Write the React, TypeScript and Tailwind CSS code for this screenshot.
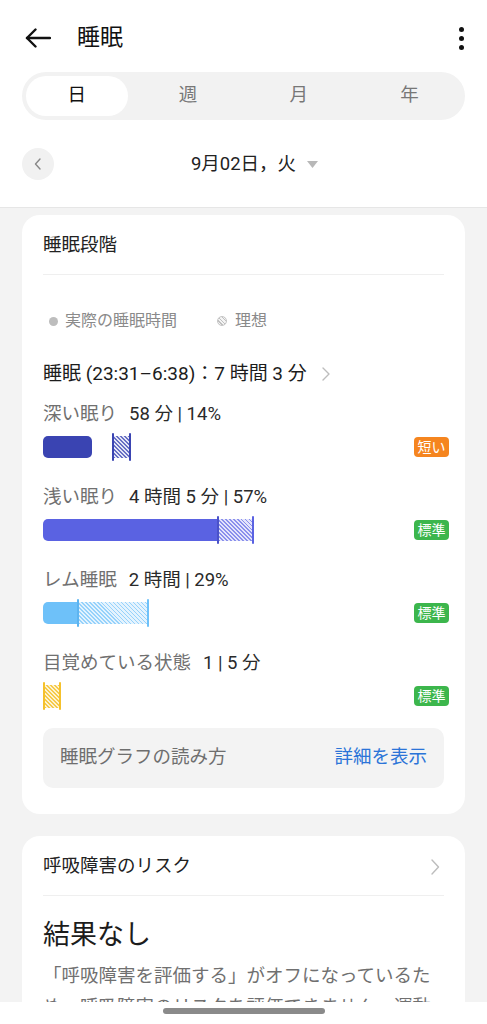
import React from 'react';

type Stage = {
  label: string;
  value: string;
  badge: string;
  badgeColor: string;
};

function Badge({ text, color }: { text: string; color: string }) {
  return (
    <div className={`${color} h-[20px] w-[35px] rounded-[4px] text-white text-[14px] leading-[20px] text-center`}>
      {text}
    </div>
  );
}

function Marker({ color, tall = 'h-[28px]' }: { color: string; tall?: string }) {
  return <div className={`w-[2px] ${tall} ${color} rounded-[1px]`} />;
}

function StageRow({ stage, children }: { stage: Stage; children: React.ReactNode }) {
  return (
    <div>
      <div className="h-[26px] flex items-center text-[18.5px]">
        <span className="text-[#707070]">{stage.label}</span>
        <span className="ml-3 text-[#2a2a2a]">{stage.value}</span>
      </div>
      <div className="mt-[5px] h-[28px] flex items-center justify-between -mr-[5px]">
        <div className="flex items-center">{children}</div>
        <Badge text={stage.badge} color={stage.badgeColor} />
      </div>
    </div>
  );
}

export default function App() {
  return (
    <div className="h-[1024px] w-full flex flex-col bg-[#f3f3f3] font-['Roboto','Noto_Sans_CJK_JP',sans-serif] overflow-hidden">
      <div className="flex-1 overflow-hidden">
        {/* Header */}
        <div className="bg-white border-b border-[#e6e6e6]">
          <div className="h-[72px] pt-[4px] flex items-center px-[25px]">
            <svg width="26" height="20" viewBox="0 0 26 20" fill="none" stroke="#111" strokeWidth="2.4" strokeLinecap="round" strokeLinejoin="round">
              <path d="M2 10H25" />
              <path d="M10.5 1.5L2 10l8.5 8.5" />
            </svg>
            <div className="ml-[26px] text-[23px] text-[#111]">睡眠</div>
            <div className="ml-auto mr-[-2px] flex flex-col gap-[4px] items-center">
              <span className="w-[5px] h-[5px] rounded-full bg-[#111]" />
              <span className="w-[5px] h-[5px] rounded-full bg-[#111]" />
              <span className="w-[5px] h-[5px] rounded-full bg-[#111]" />
            </div>
          </div>

          {/* Tabs */}
          <div className="mx-[22px] h-[48px] rounded-full bg-[#f2f2f2] grid grid-cols-4 text-[18.5px]">
            <div className="p-[4px] pr-[5px]">
              <div className="h-full rounded-full bg-white flex items-center justify-center text-[#111]">
                日
              </div>
            </div>
            <div className="flex items-center justify-center text-[#777]">週</div>
            <div className="flex items-center justify-center text-[#777]">月</div>
            <div className="flex items-center justify-center text-[#777]">年</div>
          </div>

          {/* Date row */}
          <div className="mt-[28px] pb-[27px] px-[22px] grid grid-cols-[1fr_auto_1fr] items-center">
            <div>
              <div className="w-[32px] h-[32px] rounded-full bg-[#f1f1f1] flex items-center justify-center">
                <svg width="10" height="14" viewBox="0 0 10 14" fill="none" stroke="#888" strokeWidth="1.4" strokeLinecap="round" strokeLinejoin="round">
                  <path d="M7 2L2.5 7 7 12" />
                </svg>
              </div>
            </div>
            <div className="text-[18.5px] text-[#222] leading-[32px]">9月02日，火</div>
            <div className="pl-[11px] flex items-center">
              <svg width="11" height="7" viewBox="0 0 11 7">
                <path d="M0 0H11L5.5 7Z" fill="#b8b8b8" />
              </svg>
            </div>
          </div>
        </div>

        {/* Sleep stages card */}
        <div className="mx-[22px] mt-[7px] bg-white rounded-[18px] px-[21px] pt-[18px] pb-[26px]">
          <div className="h-[26px] flex items-center text-[18.5px] text-[#222]">睡眠段階</div>
          <div className="mt-[15px] h-px bg-[#efefef]" />

          <div className="mt-[34px] h-[24px] flex items-center text-[16px] text-[#8a8a8a]">
            <span className="ml-[6px] w-[9px] h-[9px] rounded-full bg-[#bdbdbd]" />
            <span className="ml-[7px]">実際の睡眠時間</span>
            <span className="ml-[40px] w-[10px] h-[10px] rounded-full border border-[#c4c4c4] bg-[repeating-linear-gradient(45deg,#c0c0c0_0_1px,#f4f4f4_1px_2.6px)]" />
            <span className="ml-[8px]">理想</span>
          </div>

          <div className="mt-[27px] h-[28px] flex items-center text-[19px] text-[#1c1c1c]">
            <span>睡眠 (23:31–6:38)：7 時間 3 分</span>
            <svg className="ml-[14px]" width="10" height="16" viewBox="0 0 10 16" fill="none" stroke="#bdbdbd" strokeWidth="1.4" strokeLinecap="round" strokeLinejoin="round">
              <path d="M2 2l6 6-6 6" />
            </svg>
          </div>

          <div className="mt-[14px] flex flex-col gap-[24px]">
            <StageRow stage={{ label: '深い眠り', value: '58 分 | 14%', badge: '短い', badgeColor: 'bg-[#f5851f]' }}>
              <div className="w-[49px] h-[22px] rounded-[5px] bg-[#3a44b2]" />
              <div className="ml-[20px]" />
              <Marker color="bg-[#3a44b2]" />
              <div className="w-[15px] h-[22px] bg-[repeating-linear-gradient(45deg,#6870c4_0_1px,#e4e6f6_1px_2.8px)]" />
              <Marker color="bg-[#3a44b2]" />
            </StageRow>

            <StageRow stage={{ label: '浅い眠り', value: '4 時間 5 分 | 57%', badge: '標準', badgeColor: 'bg-[#3cb64c]' }}>
              <div className="w-[174px] h-[22px] rounded-l-[5px] bg-[#5a62e2]" />
              <Marker color="bg-[#4a52c8]" />
              <div className="w-[33px] h-[22px] bg-[repeating-linear-gradient(45deg,#8a90ec_0_1px,#e4e5fb_1px_2.8px)]" />
              <Marker color="bg-[#5a62e2]" />
            </StageRow>

            <StageRow stage={{ label: 'レム睡眠', value: '2 時間 | 29%', badge: '標準', badgeColor: 'bg-[#3cb64c]' }}>
              <div className="w-[34px] h-[22px] rounded-l-[5px] bg-[#6ec1f9]" />
              <Marker color="bg-[#5db4f0]" />
              <div className="w-[68px] h-[22px] bg-[repeating-linear-gradient(45deg,#96d2fb_0_1px,#e4f3fe_1px_2.8px)]" />
              <Marker color="bg-[#6ec1f9]" />
            </StageRow>

            <StageRow stage={{ label: '目覚めている状態', value: '1 | 5 分', badge: '標準', badgeColor: 'bg-[#3cb64c]' }}>
              <Marker color="bg-[#f5c12c]" />
              <div className="w-[14px] h-[23px] bg-[repeating-linear-gradient(45deg,#f6ca4a_0_1px,#fdf3d2_1px_2.8px)]" />
              <Marker color="bg-[#f5c12c]" />
            </StageRow>
          </div>

          <div className="mt-[18px] h-[60px] rounded-[10px] bg-[#f3f3f3] px-[17px] flex items-center justify-between text-[18.5px]">
            <span className="text-[#6e6e6e]">睡眠グラフの読み方</span>
            <span className="text-[#2b74d8]">詳細を表示</span>
          </div>
        </div>

        {/* Breathing risk card */}
        <div className="mx-[22px] mt-[22px] bg-white rounded-[18px] px-[21px] pt-[18px] pb-[20px]">
          <div className="h-[26px] flex items-center justify-between text-[18.5px] text-[#222]">
            <span>呼吸障害のリスク</span>
            <svg className="mr-[4px]" width="10" height="18" viewBox="0 0 10 18" fill="none" stroke="#bdbdbd" strokeWidth="1.4" strokeLinecap="round" strokeLinejoin="round">
              <path d="M2 2l6.5 7L2 16" />
            </svg>
          </div>
          <div className="mt-[15px] h-px bg-[#efefef]" />
          <div className="mt-[21px] h-[36px] flex items-center text-[27px] text-[#1c1c1c]">結果なし</div>
          <p className="mt-[8px] text-[18.5px] leading-[31px] text-[#707070]">
            「呼吸障害を評価する」がオフになっているため、呼吸障害のリスクを評価できません。運動中の呼吸障害を確認するには、設定をオンにしてください。
          </p>
        </div>
      </div>

      {/* System nav bar */}
      <div className="h-[22px] bg-white flex justify-center pt-[6px]">
        <div className="w-[162px] h-[6px] rounded-full bg-[#8a8a8a]" />
      </div>
    </div>
  );
}
